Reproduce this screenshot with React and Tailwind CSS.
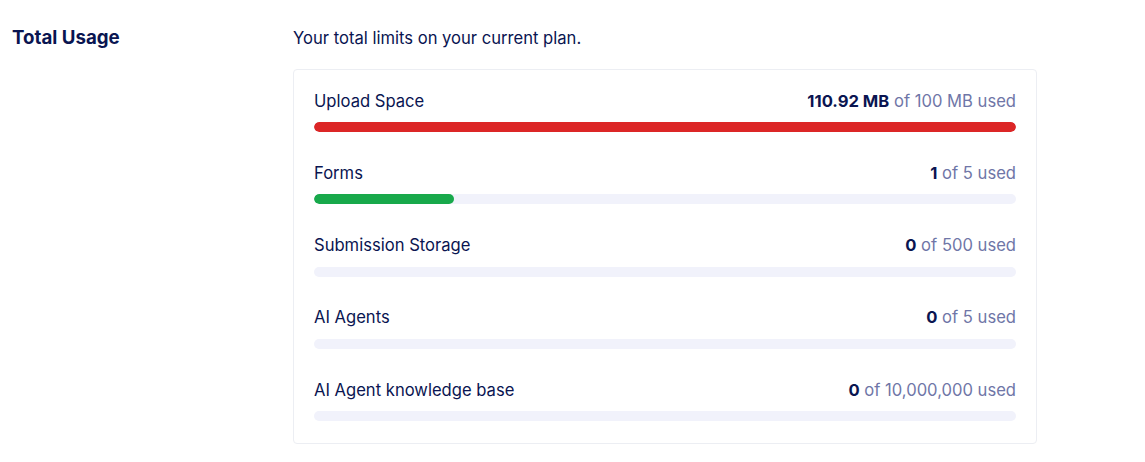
import React from 'react'

const usage = [
  { label: 'Upload Space', used: '110.92 MB', limit: '100 MB', pct: 100, color: 'bg-[#dc2626]' },
  { label: 'Forms', used: '1', limit: '5', pct: 20, color: 'bg-[#18a94b]' },
  { label: 'Submission Storage', used: '0', limit: '500', pct: 0, color: 'bg-[#18a94b]' },
  { label: 'AI Agents', used: '0', limit: '5', pct: 0, color: 'bg-[#18a94b]' },
  { label: 'AI Agent knowledge base', used: '0', limit: '10,000,000', pct: 0, color: 'bg-[#18a94b]' },
]

function UsageRow({ item }) {
  return (
    <div className="flex flex-col">
      <div className="flex items-center justify-between h-[22px]">
        <span className="text-[16.6px] text-[#0a1551]">{item.label}</span>
        <span className="text-[16.6px] text-[#6f76a7]">
          <span className="font-bold text-[#0a1551]">{item.used}</span> of {item.limit} used
        </span>
      </div>
      <div className="mt-[10px] h-[10px] w-full rounded-full bg-[#f1f2fb] overflow-hidden">
        {item.pct > 0 && (
          <div className={`h-full rounded-full ${item.color}`} style={{ width: `${item.pct}%` }} />
        )}
      </div>
    </div>
  )
}

export default function App() {
  return (
    <div className="w-[1145px] h-[462px] bg-white flex font-['Inter',sans-serif] antialiased">
      <div className="w-[293px] pl-[12px] pt-[26px]">
        <h2 className="text-[18.7px] font-bold text-[#0a1551] leading-[24px]">Total Usage</h2>
      </div>
      <div className="w-[744px] pt-[27px]">
        <p className="text-[16.6px] text-[#0a1551] leading-[22px]">Your total limits on your current plan.</p>
        <div className="mt-[20px] border border-[#eceef3] rounded-[4px] px-[20px] pt-[20px] pb-[22px] flex flex-col gap-[30.3px]">
          {usage.map((item) => (
            <UsageRow key={item.label} item={item} />
          ))}
        </div>
      </div>
    </div>
  )
}
